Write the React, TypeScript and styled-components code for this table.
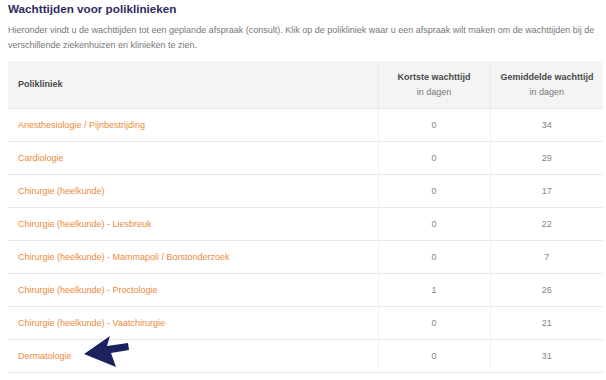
import React from 'react'
import styled, { createGlobalStyle } from 'styled-components'

const GlobalStyle = createGlobalStyle`
	html, body {
		margin: 0;
		padding: 0;
		background: #fff;
	}
	body {
		font-family: 'Liberation Sans', Arial, sans-serif;
	}
`

const Page = styled.div`
	position: relative;
	width: 606px;
	height: 380px;
	overflow: hidden;
	padding: 1px 3px 0 8px;
	box-sizing: border-box;
`

const Title = styled.h2`
	margin: 0;
	font-size: 11.7px;
	line-height: 16px;
	font-weight: bold;
	color: #2f2b5e;
`

const Intro = styled.p`
	margin: 6px 0 0;
	font-size: 9px;
	line-height: 15px;
	color: #777;
`

const Table = styled.table`
	width: 595px;
	margin-top: 8px;
	border-collapse: collapse;
	table-layout: fixed;
	font-size: 9px;
`

const HeadCell = styled.th<{ $align?: 'left' | 'center' }>`
	height: 47px;
	padding: 0 10px;
	background: #f4f4f4;
	color: #4a4a4a;
	font-weight: bold;
	white-space: nowrap;
	text-align: ${p => p.$align || 'center'};
	vertical-align: middle;
	line-height: 15px;
	border-left: ${p => (p.$align === 'left' ? 'none' : '1px solid #ececec')};

	span {
		display: block;
		font-weight: normal;
		color: #777;
	}
`

const Row = styled.tr`
	border-bottom: 1px solid #e9e9e9;
`

const NameCell = styled.td`
	height: 32px;
	padding: 0 10px;
	color: #ec8a3c;
`

const NumCell = styled.td`
	padding: 0 10px;
	text-align: center;
	color: #858585;
	border-left: 1px solid #f1f1f1;
`

const Arrow = styled.svg`
	position: absolute;
	left: 82px;
	top: 334px;
`

const rows: [string, number, number][] = [
	['Anesthesiologie / Pijnbestrijding', 0, 34],
	['Cardiologie', 0, 29],
	['Chirurgie (heelkunde)', 0, 17],
	['Chirurgie (heelkunde) - Liesbreuk', 0, 22],
	['Chirurgie (heelkunde) - Mammapoli / Borstonderzoek', 0, 7],
	['Chirurgie (heelkunde) - Proctologie', 1, 26],
	['Chirurgie (heelkunde) - Vaatchirurgie', 0, 21],
	['Dermatologie', 0, 31],
]

export default function App() {
	return (
		<Page>
			<GlobalStyle />
			<Title>Wachttijden voor poliklinieken</Title>
			<Intro>
				Hieronder vindt u de wachttijden tot een geplande afspraak (consult). Klik op de polikliniek waar u een afspraak wilt maken om de wachttijden bij de verschillende ziekenhuizen en klinieken te zien.
			</Intro>
			<Table>
				<colgroup>
					<col />
					<col style={{ width: 112 }} />
					<col style={{ width: 113 }} />
				</colgroup>
				<thead>
					<Row>
						<HeadCell $align='left'>Polikliniek</HeadCell>
						<HeadCell>Kortste wachttijd<span>in dagen</span></HeadCell>
						<HeadCell>Gemiddelde wachttijd<span>in dagen</span></HeadCell>
					</Row>
				</thead>
				<tbody>
					{rows.map(([name, min, avg]) => (
						<Row key={name}>
							<NameCell>{name}</NameCell>
							<NumCell>{min}</NumCell>
							<NumCell>{avg}</NumCell>
						</Row>
					))}
				</tbody>
			</Table>
			<Arrow width='50' height='36' viewBox='0 0 50 36'>
				<polygon points='2,20 28,2 25,12 46,9 47,16 29,19 34,33' fill='#1c2160' />
			</Arrow>
		</Page>
	)
}
